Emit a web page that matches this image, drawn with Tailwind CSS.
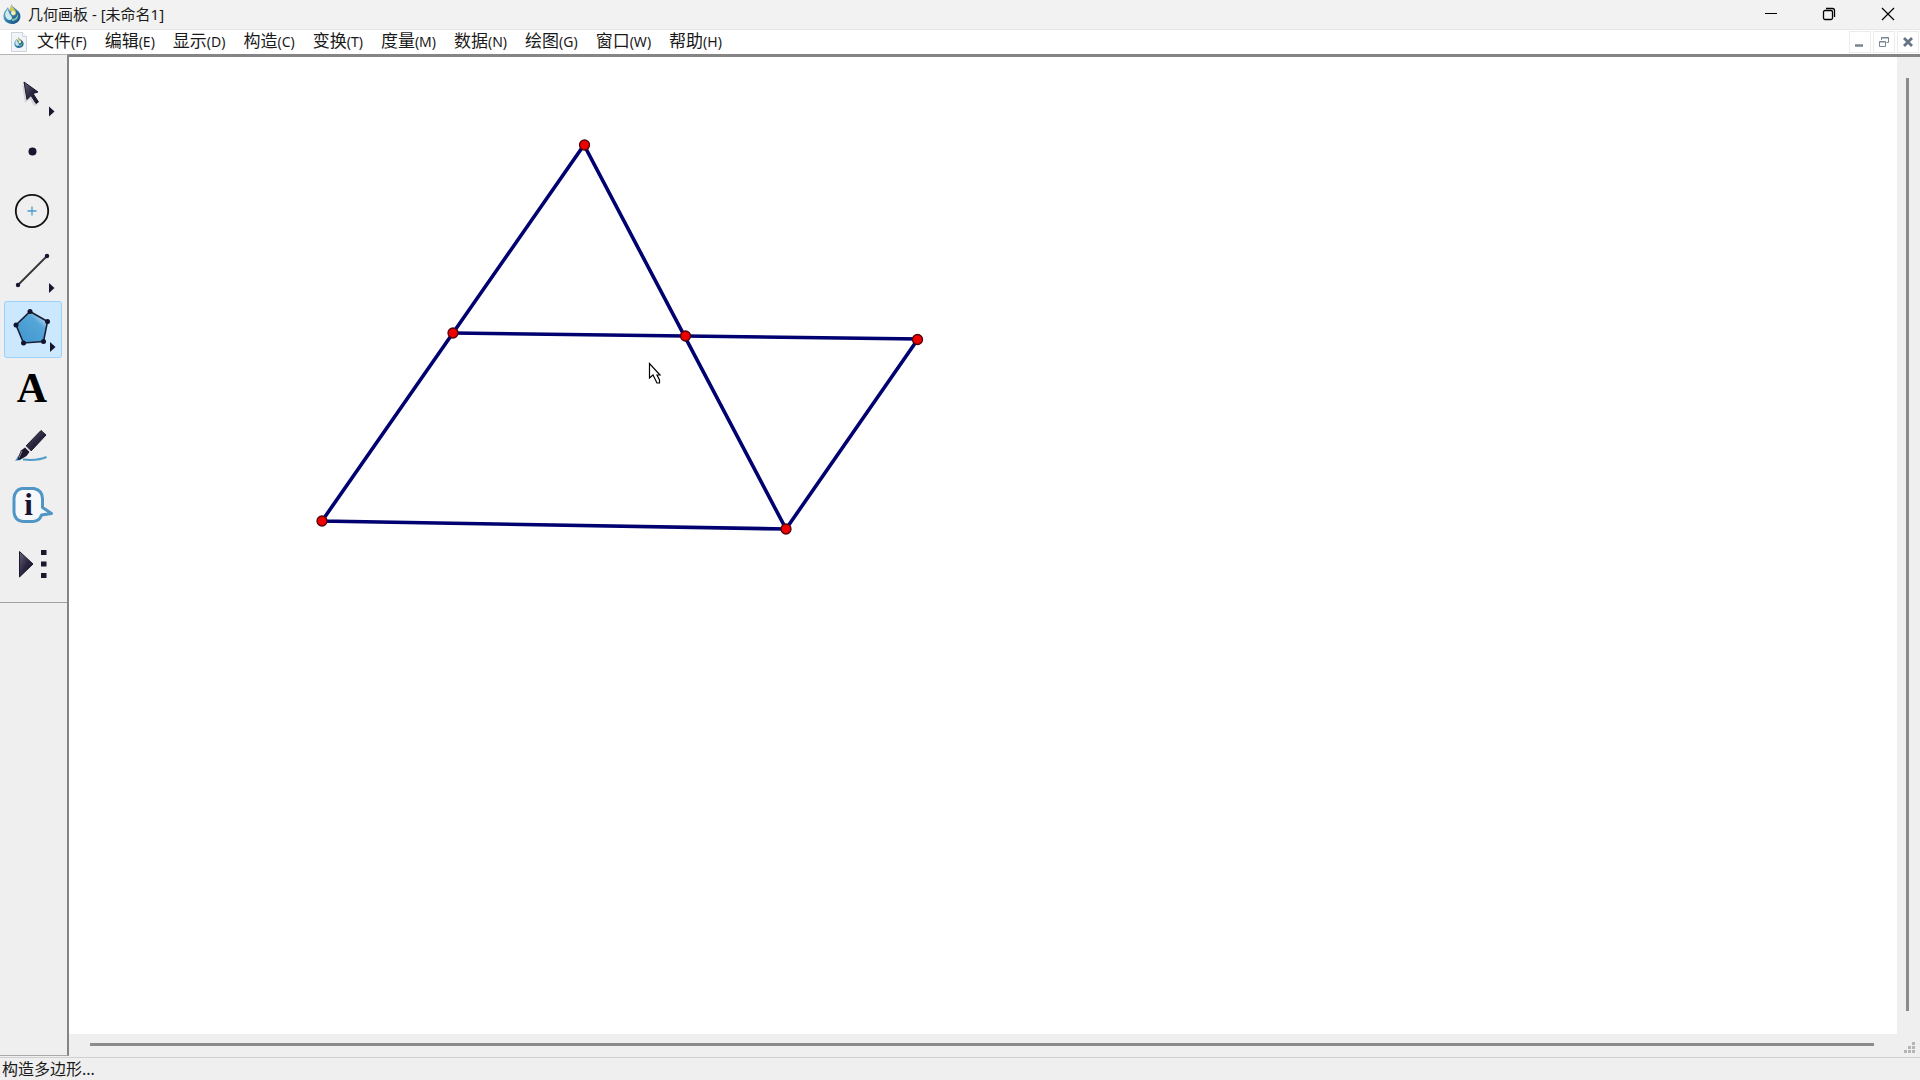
<!DOCTYPE html>
<html lang="zh-CN">
<head>
<meta charset="utf-8">
<title>几何画板 - [未命名1]</title>
<script src="https://cdn.jsdelivr.net/npm/@tailwindcss/browser@4"></script>
</head>
<body class="flex h-screen flex-col overflow-hidden bg-[#efefef] font-['Noto_Sans','Noto_Sans_CJK_SC',sans-serif] text-[#1a1a1a]">
<svg class="absolute h-0 w-0" aria-hidden="true">
  <defs>
    <linearGradient id="ink" x1="0" y1="0" x2="1" y2="1"><stop offset="0" stop-color="#6a6478"/><stop offset=".5" stop-color="#2c2740"/><stop offset="1" stop-color="#151024"/></linearGradient>
    <linearGradient id="blue" x1="1" y1="0" x2="0.3" y2="0.8"><stop offset="0.1" stop-color="#d5ebf8"/><stop offset=".45" stop-color="#56a6d8"/><stop offset="1" stop-color="#469bd0"/></linearGradient>
    <linearGradient id="drop" x1="0" y1="0" x2="1" y2="1"><stop offset="0" stop-color="#8fc4e4"/><stop offset=".5" stop-color="#2e7fa8"/><stop offset="1" stop-color="#1c4a86"/></linearGradient>
    <symbol id="logo" viewBox="0 0 18 20">
      <path d="M8 0C9 3 14 5 16 8c4 6-1 12-7 12S-1 15 1 9c1-3 3-4 4-6l1 3c2-2 2-4 2-6z" fill="url(#drop)"/>
      <path d="M8 0c1 4 5 5 5 9 0 2-2 3-4 2 1-3-1-4-3-5 2-2 2-4 2-6z" fill="#d9c95c"/>
      <path d="M5 5c-3 3-4 7-1 10 2 2 5 1 5-1 0-3-4-4-4-9z" fill="#cde9f2"/>
      <path d="M9 15c3 0 5-2 6-5 1 5-3 7-6 7z" fill="#7fc7a4"/>
      <circle cx="10" cy="9" r="2" fill="#f6f3cf"/>
    </symbol>
  </defs>
</svg>

<header class="flex h-[29px] shrink-0 items-center bg-[#f2f2f2] pb-px pl-[3px]">
  <svg class="mr-[7px] h-5 w-[18px]"><use href="#logo"/></svg>
  <h1 class="flex-1 pb-px text-[15px] leading-5">几何画板 - [未命名1]</h1>
  <div class="flex h-full">
    <button aria-label="最小化" class="grid w-[58px] place-items-center"><svg width="14" height="14" stroke="#000" fill="none"><path d="M1 6.500h12"/></svg></button>
    <button aria-label="还原" class="grid w-[58px] place-items-center"><svg width="14" height="14" stroke="#000" fill="none" stroke-width="1.300"><rect x="1.500" y="3.500" width="9" height="9" rx="1.500"/><path d="M4 1.500h6.500a2 2 0 0 1 2 2V10"/></svg></button>
    <button aria-label="关闭" class="grid w-[62px] place-items-center pr-[2px]"><svg width="14" height="14" stroke="#000" fill="none" stroke-width="1.200"><path d="M1 1l12 12M13 1L1 13"/></svg></button>
  </div>
</header>

<nav class="flex h-[25px] shrink-0 items-center border-t border-[#e6e6e6] bg-white pr-px pl-[10px]">
  <svg class="h-5 w-[18px]" viewBox="0 0 18 20"><path d="M1.500.500h11l4 4v15h-15z" fill="#f1f4f8" stroke="#cdd3da"/><path d="M12.500.500v4h4" fill="#fff" stroke="#cdd3da"/><use href="#logo" x="4" y="5" width="10" height="11"/></svg>
  <div class="flex flex-1 pb-[2px] text-[17px] leading-[22px]">
    <button class="px-[9px]">文件<span class="text-[14px]">(F)</span></button>
    <button class="px-[9px]">编辑<span class="text-[14px]">(E)</span></button>
    <button class="px-[9px]">显示<span class="text-[14px]">(D)</span></button>
    <button class="px-[9px]">构造<span class="text-[14px]">(C)</span></button>
    <button class="px-[9px]">变换<span class="text-[14px]">(T)</span></button>
    <button class="px-[9px]">度量<span class="text-[14px]">(M)</span></button>
    <button class="px-[9px]">数据<span class="text-[14px]">(N)</span></button>
    <button class="px-[9px]">绘图<span class="text-[14px]">(G)</span></button>
    <button class="px-[9px]">窗口<span class="text-[14px]">(W)</span></button>
    <button class="px-[9px]">帮助<span class="text-[14px]">(H)</span></button>
  </div>
  <div class="flex gap-[2px]">
    <button aria-label="最小化文档" class="grid h-[22px] w-[22px] place-items-center border border-[#ececec]"><svg width="12" height="12"><path d="M1 9.500h8" stroke="#7a8594" stroke-width="2.500"/></svg></button>
    <button aria-label="还原文档" class="grid h-[22px] w-[22px] place-items-center border border-[#ececec]"><svg width="12" height="12" fill="none" stroke="#7a8594"><path d="M3.500 4V1.500h7v5H8.500M3 2h8M1 6h7"/><path d="M1.500 5.500h6v5h-6z"/></svg></button>
    <button aria-label="关闭文档" class="grid h-[22px] w-[22px] place-items-center border border-[#ececec]"><svg width="12" height="12"><path d="M2 2l8 8M10 2l-8 8" stroke="#667384" stroke-width="2.800"/></svg></button>
  </div>
</nav>

<div class="flex min-h-0 flex-1">
  <aside class="flex w-[69px] shrink-0 flex-col border-t border-r-2 border-b border-t-[#b5b5b5] border-r-[#858585] border-b-[#a8a8a8]">
    <div class="flex flex-col gap-[2px] border-b border-[#a0a0a0] pt-[10px] pb-2 pl-1">
      <button aria-label="移动箭头工具" class="h-[57px] w-[58px]"><svg viewBox="0 0 58 57"><path d="M18 19l3 19 5-4 4 7 4-1" fill="#d4d4d8"/><path d="M20 17l14 10-5 1.500 5.500 8.500-2.500 1.500-5-8-4 4z" fill="url(#ink)" stroke="#1c172c"/><path d="M45 41.500l5.500 5-5.500 5z" fill="#1a1530"/></svg></button>
      <button aria-label="点工具" class="h-[57px] w-[58px]"><svg viewBox="0 0 58 57"><circle cx="28.500" cy="27.500" r="4" fill="#1a1530"/></svg></button>
      <button aria-label="圆工具" class="h-[57px] w-[58px]"><svg viewBox="0 0 58 57"><circle cx="28" cy="28" r="16.200" fill="none" stroke="#111" stroke-width="1.800"/><path d="M28 23.500v9M23.500 28h9" stroke="#4a9bcb" stroke-width="1.300"/></svg></button>
      <button aria-label="线段工具" class="h-[57px] w-[58px]"><svg viewBox="0 0 58 57"><path d="M14 43L43 14" stroke="#333" stroke-width="1.800"/><circle cx="14" cy="43" r="2.200" fill="#1a1530"/><circle cx="43" cy="14" r="2.200" fill="#1a1530"/><path d="M45 41l5.500 5-5.500 5z" fill="#1a1530"/></svg></button>
      <button aria-label="多边形工具" aria-pressed="true" class="h-[57px] w-[58px] rounded-[3px] bg-[#cce8ff] outline outline-1 -outline-offset-1 outline-[#99d1ff]"><svg viewBox="0 0 58 57"><path d="M26 10.500l17.500 10-4 20-20 1.500L12 24z" fill="url(#blue)" stroke="#1a1f33" stroke-width="1.600"/><g fill="#12142c"><circle cx="26" cy="10.500" r="2.500"/><circle cx="43.500" cy="20.500" r="2.500"/><circle cx="39.500" cy="40.500" r="2.500"/><circle cx="19.500" cy="42" r="2.500"/><circle cx="12" cy="24" r="2.500"/><path d="M46 41l5.500 5-5.500 5z"/></g></svg></button>
      <button aria-label="文本工具" class="h-[57px] w-[58px]"><svg viewBox="0 0 58 57"><text x="28" y="42" text-anchor="middle" class="font-['Liberation_Serif',serif] text-[42px] font-bold">A</text></svg></button>
      <button aria-label="标记工具" class="h-[57px] w-[58px]"><svg viewBox="0 0 58 57"><path d="M19 40.500c8 .8 17 .5 23.500-2.500" fill="none" stroke="#4f9cca" stroke-width="2"/><path d="M11 42l3-5 3 4z" fill="#4f9cca"/><path d="M22 27l15-15.500 5 4.500-15 16z" fill="url(#ink)" stroke="#1c172c"/><path d="M21 28.500l4.500 4.500-3 4-6 3.500-3 .5 1-4 2.500-5.500z" fill="#1c172c"/><path d="M18 32l-3 7" stroke="#85808f"/><path d="M21.500 27.500l5 5" stroke="#dcdce0" stroke-width="1.200"/></svg></button>
      <button aria-label="信息工具" class="h-[57px] w-[58px]"><svg viewBox="0 0 58 57"><path d="M18 10.500h12q8.500 2 8.500 10v9l9 6-10 1.500q-2 6-8.500 6.500H19q-8-.5-9-9V20q1-8.500 8-9.500z" fill="#f6f8fa" stroke="#4f96c6" stroke-width="3" stroke-linejoin="round"/><text x="24.500" y="37" text-anchor="middle" fill="#1a1530" class="font-['Liberation_Serif',serif] text-[31px] font-bold">i</text></svg></button>
      <button aria-label="自定义工具" class="h-[57px] w-[58px]"><svg viewBox="0 0 58 57"><path d="M15.500 14.500L29 27 15.500 40z" fill="url(#ink)" stroke="#1c172c"/><path d="M37 13h5.500v5H37zM37 24.500h5.500v5H37zM37 36h5.500v5H37z" fill="#1c172c"/></svg></button>
    </div>
  </aside>

  <main class="flex min-w-0 flex-1 flex-col border-t-[3px] border-[#858585]">
    <div class="flex min-h-0 flex-1">
      <svg class="h-full min-w-0 flex-1 bg-white" role="img" aria-label="几何图形">
        <g fill="none" stroke="#000070" stroke-width="3.600">
          <path d="M253 464L515 88L717 472Z"/>
          <path d="M384 276L849 282L717 472"/>
        </g>
        <g fill="#ee0000" stroke="#500008" stroke-width="1.300">
          <circle cx="515.500" cy="88" r="5"/><circle cx="384" cy="276" r="5"/><circle cx="253" cy="464" r="5"/><circle cx="616.500" cy="279" r="5"/><circle cx="848.500" cy="282.500" r="5"/><circle cx="717" cy="472" r="5"/>
        </g>
        <path d="M580.500 306.500v14.500l3.500-3 4 8h2.500v-3l-2.500-5h3z" fill="#fff" stroke="#000" stroke-width="1.200"/>
      </svg>
      <div class="flex w-[23px] justify-center pt-[21px] pr-[3px] pb-[23px]"><div class="w-[3px] bg-[#8b8b8b]"></div></div>
    </div>
    <div class="flex h-[22px] shrink-0 items-center pr-[5px] pb-[2px] pl-[21px]">
      <div class="h-[3px] flex-1 bg-[#8b8b8b]"></div>
      <svg class="ml-[30px] h-[11px] w-[11px] translate-y-[3px]" fill="#b5b5b5"><path d="M8 0h3v3H8zM4 4h3v3H4zM8 4h3v3H8zM0 8h3v3H0zM4 8h3v3H4zM8 8h3v3H8z"/></svg>
    </div>
  </main>
</div>

<footer class="mt-px h-[23px] shrink-0 border-t border-[#d0d0d0] pl-[2px] text-[16px] leading-[22px]">构造多边形...</footer>
</body>
</html>
